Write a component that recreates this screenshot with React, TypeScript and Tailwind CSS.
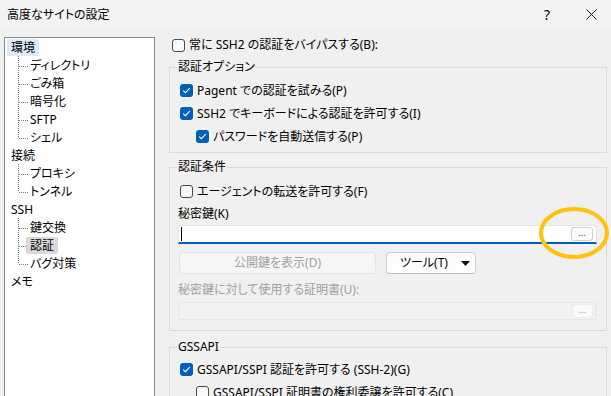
import React from "react";

const Check = ({ checked }: { checked: boolean }) =>
  checked ? (
    <span className="flex h-[13px] w-[13px] shrink-0 items-center justify-center rounded-[3px] bg-[#005fb8]">
      <svg width="9" height="7" viewBox="0 0 9 7">
        <path d="M1.2 3.6 L3.4 5.7 L7.8 1.2" fill="none" stroke="white" strokeWidth="1.1" />
      </svg>
    </span>
  ) : (
    <span className="h-[13px] w-[13px] shrink-0 rounded-[3px] border border-[#4a4a4a] bg-[#f9f9f9]" />
  );

const CheckRow = ({ checked, label, indent }: { checked: boolean; label: string; indent?: boolean }) => (
  <div className={indent ? "flex h-[23px] items-center gap-[4px] pl-[26px]" : "flex h-[23px] items-center gap-[4px] pl-[10px]"}>
    <Check checked={checked} />
    <span className="whitespace-nowrap leading-[16px]">{label}</span>
  </div>
);

const Connector = ({ last }: { last: boolean }) => (
  <svg width="23" height="18" className="shrink-0" shapeRendering="crispEdges">
    <line x1="13.5" y1="0" x2="13.5" y2={last ? 10 : 18} stroke="#7a7a7a" strokeDasharray="1 1" />
    <line x1="14" y1="10.5" x2="23" y2="10.5" stroke="#7a7a7a" strokeDasharray="1 1" />
  </svg>
);

type Node = { label: string; sel?: "blue" | "gray"; children: { label: string; sel?: "blue" | "gray" }[] };

const tree: Node[] = [
  { label: "環境", sel: "blue", children: [{ label: "ディレクトリ" }, { label: "ごみ箱" }, { label: "暗号化" }, { label: "SFTP" }, { label: "シェル" }] },
  { label: "接続", children: [{ label: "プロキシ" }, { label: "トンネル" }] },
  { label: "SSH", children: [{ label: "鍵交換" }, { label: "認証", sel: "gray" }, { label: "バグ対策" }] },
  { label: "メモ", children: [] },
];

const selClass = (sel?: "blue" | "gray") =>
  sel === "blue"
    ? "rounded-[2px] bg-[#dcebfb] px-[4px] leading-[17px]"
    : sel === "gray"
    ? "rounded-[2px] bg-[#d9d9d9] px-[4px] leading-[17px]"
    : "px-[4px] leading-[17px]";

export default function App() {
  return (
    <div className="relative h-[396px] w-[611px] overflow-hidden bg-[#f0f0f0] font-['Noto_Sans','Noto_Sans_CJK_JP',sans-serif] text-[12px] text-black [font-feature-settings:'palt']">
      {/* title bar */}
      <div className="flex h-[29px] items-center bg-[#f3f3f3] pl-[7px]">
        <span className="text-[12px] leading-[16px]">高度なサイトの設定</span>
        <span className="ml-auto mr-[36px] text-[14px] leading-[16px]">?</span>
        <svg width="11" height="11" viewBox="0 0 11 11" className="mr-[14px]">
          <path d="M0.5 0.5 L10.5 10.5 M10.5 0.5 L0.5 10.5" stroke="#111" strokeWidth="1" />
        </svg>
      </div>

      <div className="flex">
        {/* tree */}
        <div className="ml-[4px] mt-[8px] h-[400px] w-[151px] shrink-0 border border-[#828790] bg-white">
          {tree.map((n) => (
            <div key={n.label}>
              <div className="flex h-[18px] items-center pl-[2px]">
                <span className={selClass(n.sel)}>{n.label}</span>
              </div>
              {n.children.map((c, i) => (
                <div key={c.label} className="flex h-[18px] items-center">
                  <Connector last={i === n.children.length - 1} />
                  <span className={"-ml-[2px] whitespace-nowrap " + selClass(c.sel)}>{c.label}</span>
                </div>
              ))}
            </div>
          ))}
        </div>

        {/* right column */}
        <div className="ml-[14px] flex w-[438px] shrink-0 flex-col">
          <div className="mt-[6px] flex h-[20px] items-center gap-[4px] pl-[3px]">
            <Check checked={false} />
            <span className="whitespace-nowrap leading-[16px]">常に SSH2 の認証をバイパスする(B):</span>
          </div>

          <fieldset className="mt-[4px] border border-[#d9d9d9]">
            <legend className="ml-[7px] px-[1px] leading-[16px]">認証オプション</legend>
            <div className="pb-[4px] pt-[4px]">
              <CheckRow checked label="Pagent での認証を試みる(P)" />
              <CheckRow checked label="SSH2 でキーボードによる認証を許可する(I)" />
              <CheckRow checked indent label="パスワードを自動送信する(P)" />
            </div>
          </fieldset>

          <fieldset className="mt-[6px] border border-[#d9d9d9]">
            <legend className="ml-[7px] px-[1px] leading-[16px]">認証条件</legend>
            <div className="flex flex-col pb-[10px] pt-[5px]">
              <CheckRow checked={false} label="エージェントの転送を許可する(F)" />
              <div className="flex h-[21px] items-center pl-[8px] leading-[16px]">秘密鍵(K)</div>
              <div className="ml-[8px] mr-[9px] mt-[1px] flex h-[19px] items-center rounded-t-[3px] border border-b-2 border-[#e5e5e5] border-b-[#005fb8] bg-white pl-[2px]">
                <span className="h-[14px] w-[1px] bg-black" />
                <span className="ml-auto mr-[3px] flex h-[14px] w-[22px] items-center justify-center rounded-[3px] border border-[#cfcfcf] bg-[#fbfbfb] pb-[3px] text-[9px] leading-[9px] text-[#333]">
                  ...
                </span>
              </div>
              <div className="ml-[9px] mt-[8px] flex gap-[10px]">
                <div className="flex h-[22px] w-[197px] items-center justify-center rounded-[4px] border border-[#e3e3e3] bg-[#f6f6f6] leading-[16px] text-[#a0a0a0]">
                  公開鍵を表示(D)
                </div>
                <div className="flex h-[22px] w-[90px] items-center rounded-[4px] border border-[#d0d0d0] border-b-[#bdbdbd] bg-[#fdfdfd] pl-[13px] pr-[5px] leading-[16px]">
                  <span>ツール(T)</span>
                  <svg width="9" height="5" viewBox="0 0 9 5" className="ml-auto">
                    <path d="M0 0 L9 0 L4.5 5 Z" fill="#111" />
                  </svg>
                </div>
              </div>
              <div className="ml-[8px] mt-[6px] flex h-[20px] items-center leading-[16px] text-[#a0a0a0]">
                秘密鍵に対して使用する証明書(U):
              </div>
              <div className="ml-[9px] mr-[10px] mt-[2px] flex h-[18px] items-center border border-[#e6e6e6] bg-[#f2f2f2]">
                <span className="ml-auto mr-[2px] flex h-[14px] w-[21px] items-center justify-center rounded-[3px] border border-[#ebebeb] bg-[#fafafa] pb-[3px] text-[9px] leading-[9px] text-[#a0a0a0]">
                  ...
                </span>
              </div>
            </div>
          </fieldset>

          <fieldset className="mt-[8px] border border-[#d9d9d9]">
            <legend className="ml-[7px] px-[1px] leading-[16px]">GSSAPI</legend>
            <div className="pb-[4px] pt-[3px]">
              <CheckRow checked label="GSSAPI/SSPI 認証を許可する (SSH-2)(G)" />
              <CheckRow checked={false} indent label="GSSAPI/SSPI 証明書の権利委譲を許可する(C)" />
            </div>
          </fieldset>
        </div>
      </div>

      {/* annotation */}
      <svg className="pointer-events-none absolute left-0 top-0" width="611" height="396">
        <ellipse cx="574" cy="233" rx="33" ry="24" fill="none" stroke="#ffc30f" strokeWidth="4" />
      </svg>
    </div>
  );
}
